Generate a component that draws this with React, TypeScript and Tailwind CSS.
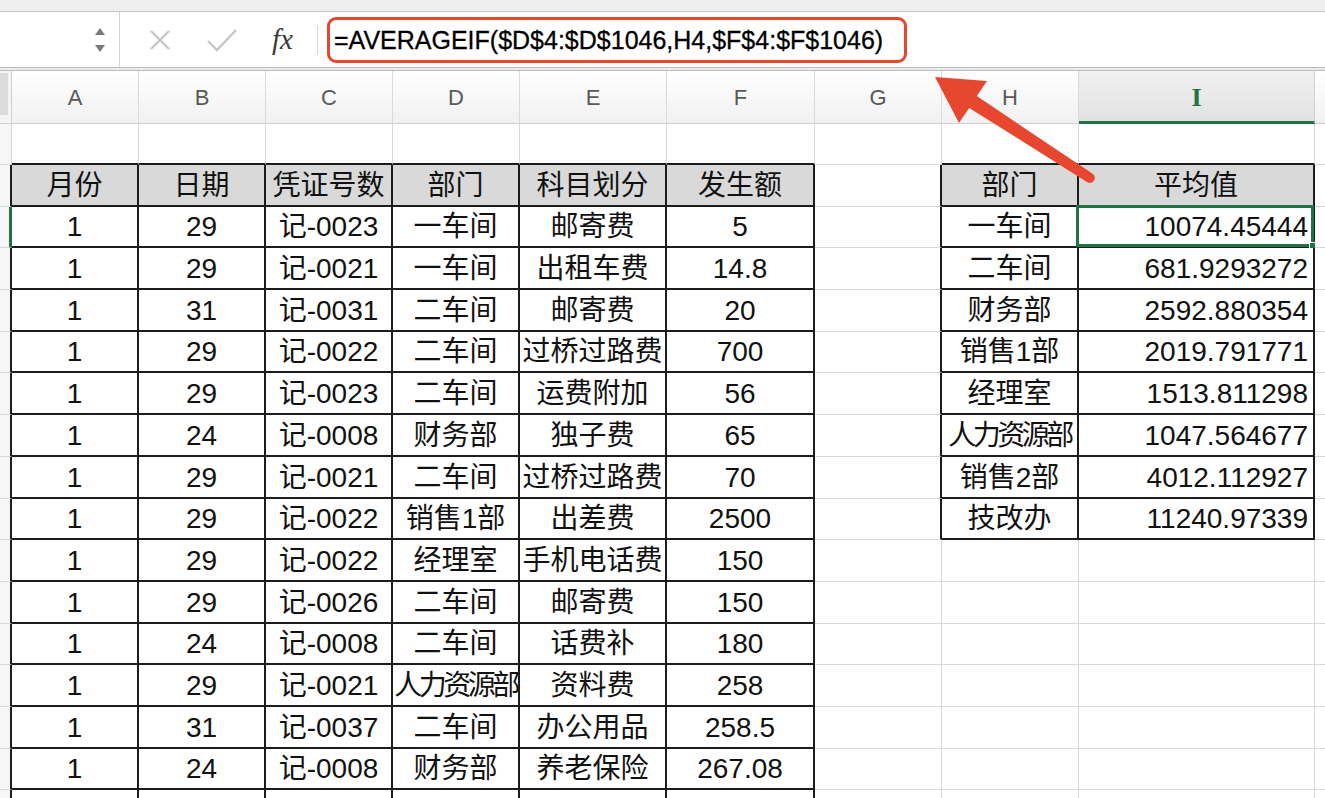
import React from "react";

const GRID =
  "grid grid-cols-[12px_127px_127px_127px_127px_147px_148px_127px_137px_236px_1fr]";

const leftData: string[][] = [
  ["1", "29", "记-0023", "一车间", "邮寄费", "5"],
  ["1", "29", "记-0021", "一车间", "出租车费", "14.8"],
  ["1", "31", "记-0031", "二车间", "邮寄费", "20"],
  ["1", "29", "记-0022", "二车间", "过桥过路费", "700"],
  ["1", "29", "记-0023", "二车间", "运费附加", "56"],
  ["1", "24", "记-0008", "财务部", "独子费", "65"],
  ["1", "29", "记-0021", "二车间", "过桥过路费", "70"],
  ["1", "29", "记-0022", "销售1部", "出差费", "2500"],
  ["1", "29", "记-0022", "经理室", "手机电话费", "150"],
  ["1", "29", "记-0026", "二车间", "邮寄费", "150"],
  ["1", "24", "记-0008", "二车间", "话费补", "180"],
  ["1", "29", "记-0021", "人力资源部", "资料费", "258"],
  ["1", "31", "记-0037", "二车间", "办公用品", "258.5"],
  ["1", "24", "记-0008", "财务部", "养老保险", "267.08"],
];

const rightData: string[][] = [
  ["一车间", "10074.45444"],
  ["二车间", "681.9293272"],
  ["财务部", "2592.880354"],
  ["销售1部", "2019.791771"],
  ["经理室", "1513.811298"],
  ["人力资源部", "1047.564677"],
  ["销售2部", "4012.112927"],
  ["技改办", "11240.97339"],
];

const leftHeader = ["月份", "日期", "凭证号数", "部门", "科目划分", "发生额"];
const rightHeader = ["部门", "平均值"];

// sheet rows 2..18
const rowHeights: Record<number, string> = {
  2: "h-[41px]",
  3: "h-[42px]",
  4: "h-[41px]",
  5: "h-[42px]",
  6: "h-[42px]",
  7: "h-[41px]",
  8: "h-[42px]",
  9: "h-[42px]",
  10: "h-[42px]",
  11: "h-[41px]",
  12: "h-[42px]",
  13: "h-[42px]",
  14: "h-[41px]",
  15: "h-[42px]",
  16: "h-[42px]",
  17: "h-[41px]",
  18: "h-[42px]",
};

const BLACK_R = "border-r-2 border-r-[#1c1c1c]";
const BLACK_B = "border-b-2 border-b-[#1c1c1c]";
const GRAY_R = "border-r border-r-[#d8d8d8]";
const GRAY_B = "border-b border-b-[#d8d8d8]";

function cellClass(r: number, c: number): string {
  let right = GRAY_R;
  let bottom = GRAY_B;
  let bg = "bg-white";
  let align = "justify-center";

  if (c === 0) {
    bg = "bg-[#f6f6f6]";
    if (r === 4) right = "border-r-[3px] border-r-[#217346]";
    else if (r >= 3) right = BLACK_R;
  } else if (c >= 1 && c <= 6) {
    if (r >= 3) right = BLACK_R;
    bottom = BLACK_B;
    if (r === 3) bg = "bg-[#d9d9d9]";
  } else if (c === 7) {
    if (r >= 3 && r <= 11) right = BLACK_R;
  } else if (c === 8 || c === 9) {
    if (r >= 3 && r <= 11) right = BLACK_R;
    if (r >= 2 && r <= 11) bottom = BLACK_B;
    if (r === 3) bg = "bg-[#d9d9d9]";
    if (c === 9 && r >= 4) align = "justify-end pr-[5px]";
  } else if (c === 10) {
    right = "";
  }
  const ov = r === 4 && c === 9 ? "overflow-visible" : "overflow-hidden";
  return `relative flex items-center whitespace-nowrap pt-[2px] ${ov} ${align} ${right} ${bottom} ${bg}`;
}

function cellText(r: number, c: number): string {
  if (r === 3) {
    if (c >= 1 && c <= 6) return leftHeader[c - 1];
    if (c === 8 || c === 9) return rightHeader[c - 8];
  }
  if (r >= 4 && r <= 17 && c >= 1 && c <= 6) return leftData[r - 4][c - 1];
  if (r >= 4 && r <= 11 && (c === 8 || c === 9)) return rightData[r - 4][c - 8];
  return "";
}

function SheetRow({ r }: { r: number }) {
  const cells = [];
  for (let c = 0; c <= 10; c++) {
    const text = cellText(r, c);
    const tight = text === "人力资源部" ? "tracking-[-3.5px]" : "";
    cells.push(
      <div key={c} className={cellClass(r, c)}>
        {text !== "" && (
          <span className={`shrink-0 leading-[1.15] ${tight}`}>{text}</span>
        )}
        {r === 4 && c === 9 && (
          <>
            <div className="absolute -left-[3px] -top-[2px] -right-[1px] -bottom-[1px] border-[3px] border-[#217346]" />
            <div className="absolute -right-[5px] -bottom-[5px] h-[9px] w-[9px] border border-white bg-[#217346]" />
          </>
        )}
      </div>
    );
  }
  return <div className={`${GRID} ${rowHeights[r]}`}>{cells}</div>;
}

const colLetters = ["", "A", "B", "C", "D", "E", "F", "G", "H", "I", ""];

export default function App() {
  const rows = [];
  for (let r = 2; r <= 18; r++) rows.push(<SheetRow key={r} r={r} />);

  return (
    <div className="relative h-[798px] w-[1325px] overflow-hidden bg-white font-['Liberation_Sans','Noto_Sans_CJK_SC',sans-serif] text-[#111]">
      {/* top strip */}
      <div className="h-[12px] border-b border-b-[#c4c4c4] bg-[#efefef]" />

      {/* formula bar */}
      <div className="flex h-[55px] items-center bg-white">
        <div className="flex h-full w-[120px] items-center justify-end border-r border-r-[#d4d4d4] pr-[13px]">
          <svg width="12" height="28" viewBox="0 0 12 28">
            <path d="M6 2 L11 9 L1 9 Z" fill="#7a7a7a" />
            <path d="M1 19 L11 19 L6 26 Z" fill="#7a7a7a" />
          </svg>
        </div>
        <div className="ml-[29px] flex h-[22px] w-[22px] items-center justify-center">
          <svg width="22" height="22" viewBox="0 0 22 22">
            <path d="M2 2 L20 20 M20 2 L2 20" stroke="#c6c6c6" strokeWidth="2.2" fill="none" />
          </svg>
        </div>
        <div className="ml-[36px] flex h-[24px] w-[30px] items-center justify-center">
          <svg width="30" height="24" viewBox="0 0 30 24">
            <path d="M1 13 L10 22 L29 2" stroke="#c6c6c6" strokeWidth="2.4" fill="none" />
          </svg>
        </div>
        <div className="ml-[35px] w-[30px] font-['Liberation_Serif',serif] text-[29px] italic leading-[1.2] text-[#3a3a3a]">
          fx
        </div>
        <div className="ml-[15px] h-[30px] w-px bg-[#d4d4d4]" />
        <div className="ml-[9px] flex h-[46px] w-[580px] items-center rounded-[9px] border-[3px] border-[#e8472f] pl-[4px] text-[25px] leading-[1.2] text-black [-webkit-text-stroke:0.3px_black]">
          =AVERAGEIF($D$4:$D$1046,H4,$F$4:$F$1046)
        </div>
      </div>

      {/* double separator */}
      <div className="h-[4px] border-y border-y-[#bdbdbd] bg-[#ececec]" />

      {/* column headers */}
      <div className={`${GRID} h-[53px]`}>
        {colLetters.map((l, i) => {
          if (i === 0) {
            return (
              <div key={i} className="relative border-r border-r-[#d0d0d0] border-b border-b-[#cfcfcf] bg-[#f4f4f4]">
                <div className="absolute left-0 top-[2px] h-[42px] w-[8px] bg-[#dcdcdc]" />
              </div>
            );
          }
          if (i === 9) {
            return (
              <div
                key={i}
                className="flex items-center justify-center border-r border-r-[#d0d0d0] border-b-[3px] border-b-[#217346] bg-linear-to-b from-[#f0f0f0] to-[#e2e2e2] pt-[2px] font-['Liberation_Serif',serif] text-[26px] font-bold text-[#217346]"
              >
                {l}
              </div>
            );
          }
          return (
            <div
              key={i}
              className={`flex items-center justify-center border-b border-b-[#cfcfcf] bg-linear-to-b from-white to-[#f1f1f1] text-[22px] text-[#595959] ${
                i === 10 ? "" : "border-r border-r-[#dadada]"
              }`}
            >
              {l}
            </div>
          );
        })}
      </div>

      {/* sheet rows */}
      <div className="text-[28px]">{rows}</div>

      {/* annotation arrow */}
      <svg
        className="pointer-events-none absolute left-0 top-0"
        width="1325"
        height="798"
        viewBox="0 0 1325 798"
      >
        <path
          d="M935 77 L987 81 L976.8 96.1 L1092.7 173.8 A5 5 0 0 1 1087.3 182.2 L969.2 107.9 L959 123 Z"
          fill="#e8472f"
        />
      </svg>
    </div>
  );
}
